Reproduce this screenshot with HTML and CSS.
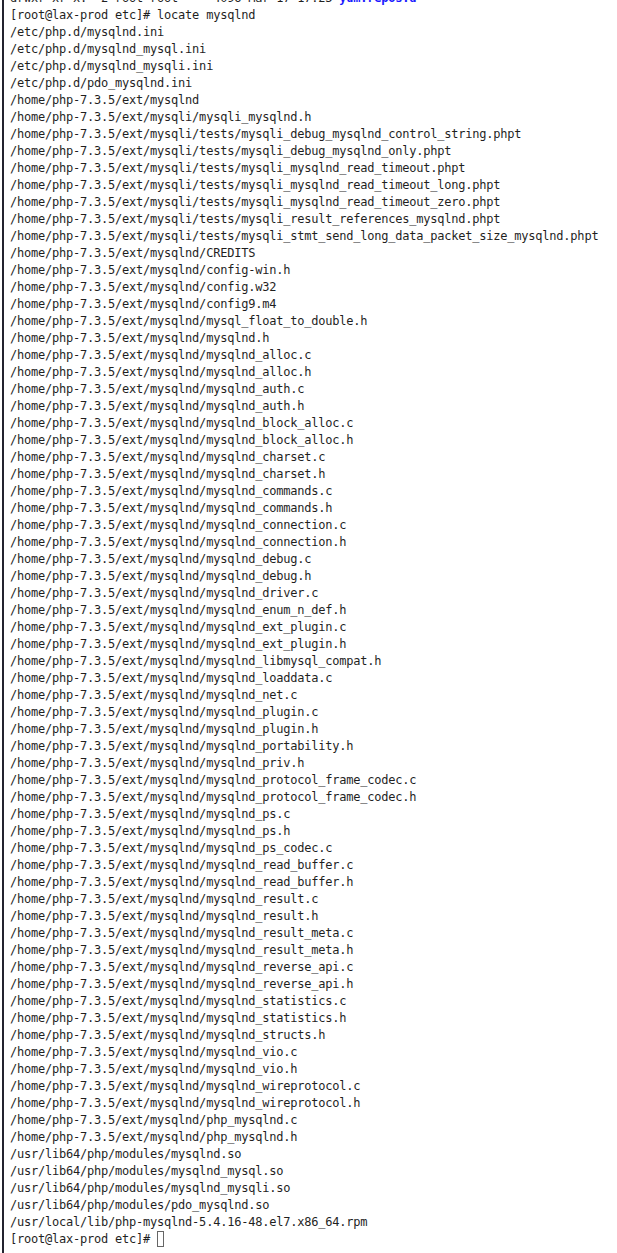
FILE: index.html
```html
<!DOCTYPE html>
<html lang="en">
<head>
    <meta charset="UTF-8">
    <meta name="viewport" content="width=device-width, initial-scale=1.0">
    <title>root@lax-prod</title>
    <link rel="stylesheet" href="styles.css">
</head>
<body>
    <div class="terminal">
<pre class="output">drwxr-xr-x.  2 root root     4096 Mar 17 17:23 <span class="dir">yum.repos.d</span>
[root@lax-prod etc]# locate mysqlnd
/etc/php.d/mysqlnd.ini
/etc/php.d/mysqlnd_mysql.ini
/etc/php.d/mysqlnd_mysqli.ini
/etc/php.d/pdo_mysqlnd.ini
/home/php-7.3.5/ext/mysqlnd
/home/php-7.3.5/ext/mysqli/mysqli_mysqlnd.h
/home/php-7.3.5/ext/mysqli/tests/mysqli_debug_mysqlnd_control_string.phpt
/home/php-7.3.5/ext/mysqli/tests/mysqli_debug_mysqlnd_only.phpt
/home/php-7.3.5/ext/mysqli/tests/mysqli_mysqlnd_read_timeout.phpt
/home/php-7.3.5/ext/mysqli/tests/mysqli_mysqlnd_read_timeout_long.phpt
/home/php-7.3.5/ext/mysqli/tests/mysqli_mysqlnd_read_timeout_zero.phpt
/home/php-7.3.5/ext/mysqli/tests/mysqli_result_references_mysqlnd.phpt
/home/php-7.3.5/ext/mysqli/tests/mysqli_stmt_send_long_data_packet_size_mysqlnd.phpt
/home/php-7.3.5/ext/mysqlnd/CREDITS
/home/php-7.3.5/ext/mysqlnd/config-win.h
/home/php-7.3.5/ext/mysqlnd/config.w32
/home/php-7.3.5/ext/mysqlnd/config9.m4
/home/php-7.3.5/ext/mysqlnd/mysql_float_to_double.h
/home/php-7.3.5/ext/mysqlnd/mysqlnd.h
/home/php-7.3.5/ext/mysqlnd/mysqlnd_alloc.c
/home/php-7.3.5/ext/mysqlnd/mysqlnd_alloc.h
/home/php-7.3.5/ext/mysqlnd/mysqlnd_auth.c
/home/php-7.3.5/ext/mysqlnd/mysqlnd_auth.h
/home/php-7.3.5/ext/mysqlnd/mysqlnd_block_alloc.c
/home/php-7.3.5/ext/mysqlnd/mysqlnd_block_alloc.h
/home/php-7.3.5/ext/mysqlnd/mysqlnd_charset.c
/home/php-7.3.5/ext/mysqlnd/mysqlnd_charset.h
/home/php-7.3.5/ext/mysqlnd/mysqlnd_commands.c
/home/php-7.3.5/ext/mysqlnd/mysqlnd_commands.h
/home/php-7.3.5/ext/mysqlnd/mysqlnd_connection.c
/home/php-7.3.5/ext/mysqlnd/mysqlnd_connection.h
/home/php-7.3.5/ext/mysqlnd/mysqlnd_debug.c
/home/php-7.3.5/ext/mysqlnd/mysqlnd_debug.h
/home/php-7.3.5/ext/mysqlnd/mysqlnd_driver.c
/home/php-7.3.5/ext/mysqlnd/mysqlnd_enum_n_def.h
/home/php-7.3.5/ext/mysqlnd/mysqlnd_ext_plugin.c
/home/php-7.3.5/ext/mysqlnd/mysqlnd_ext_plugin.h
/home/php-7.3.5/ext/mysqlnd/mysqlnd_libmysql_compat.h
/home/php-7.3.5/ext/mysqlnd/mysqlnd_loaddata.c
/home/php-7.3.5/ext/mysqlnd/mysqlnd_net.c
/home/php-7.3.5/ext/mysqlnd/mysqlnd_plugin.c
/home/php-7.3.5/ext/mysqlnd/mysqlnd_plugin.h
/home/php-7.3.5/ext/mysqlnd/mysqlnd_portability.h
/home/php-7.3.5/ext/mysqlnd/mysqlnd_priv.h
/home/php-7.3.5/ext/mysqlnd/mysqlnd_protocol_frame_codec.c
/home/php-7.3.5/ext/mysqlnd/mysqlnd_protocol_frame_codec.h
/home/php-7.3.5/ext/mysqlnd/mysqlnd_ps.c
/home/php-7.3.5/ext/mysqlnd/mysqlnd_ps.h
/home/php-7.3.5/ext/mysqlnd/mysqlnd_ps_codec.c
/home/php-7.3.5/ext/mysqlnd/mysqlnd_read_buffer.c
/home/php-7.3.5/ext/mysqlnd/mysqlnd_read_buffer.h
/home/php-7.3.5/ext/mysqlnd/mysqlnd_result.c
/home/php-7.3.5/ext/mysqlnd/mysqlnd_result.h
/home/php-7.3.5/ext/mysqlnd/mysqlnd_result_meta.c
/home/php-7.3.5/ext/mysqlnd/mysqlnd_result_meta.h
/home/php-7.3.5/ext/mysqlnd/mysqlnd_reverse_api.c
/home/php-7.3.5/ext/mysqlnd/mysqlnd_reverse_api.h
/home/php-7.3.5/ext/mysqlnd/mysqlnd_statistics.c
/home/php-7.3.5/ext/mysqlnd/mysqlnd_statistics.h
/home/php-7.3.5/ext/mysqlnd/mysqlnd_structs.h
/home/php-7.3.5/ext/mysqlnd/mysqlnd_vio.c
/home/php-7.3.5/ext/mysqlnd/mysqlnd_vio.h
/home/php-7.3.5/ext/mysqlnd/mysqlnd_wireprotocol.c
/home/php-7.3.5/ext/mysqlnd/mysqlnd_wireprotocol.h
/home/php-7.3.5/ext/mysqlnd/php_mysqlnd.c
/home/php-7.3.5/ext/mysqlnd/php_mysqlnd.h
/usr/lib64/php/modules/mysqlnd.so
/usr/lib64/php/modules/mysqlnd_mysql.so
/usr/lib64/php/modules/mysqlnd_mysqli.so
/usr/lib64/php/modules/pdo_mysqlnd.so
/usr/local/lib/php-mysqlnd-5.4.16-48.el7.x86_64.rpm
[root@lax-prod etc]# <span class="cursor"></span></pre>
    </div>
</body>
</html>
```

FILE: styles.css
```css
html, body {
    margin: 0;
    padding: 0;
    background: #fff;
}
.terminal {
    height: 1253px;
    margin-left: 2px;
    padding-left: 6px;
    border-left: 2px solid #23232f;
    overflow: hidden;
}
.output {
    margin: -10px 0 0 0;
    font-family: "DejaVu Sans Mono", "Liberation Mono", monospace;
    font-size: 12px;
    letter-spacing: -0.22px;
    line-height: 17px;
    color: #1f1f1f;
    white-space: pre;
}
.dir {
    color: #1a1aff;
    font-weight: bold;
}
.cursor {
    display: inline-block;
    width: 7px;
    height: 16px;
    border: 1px solid #666;
    box-sizing: border-box;
    vertical-align: -4px;
}
```
